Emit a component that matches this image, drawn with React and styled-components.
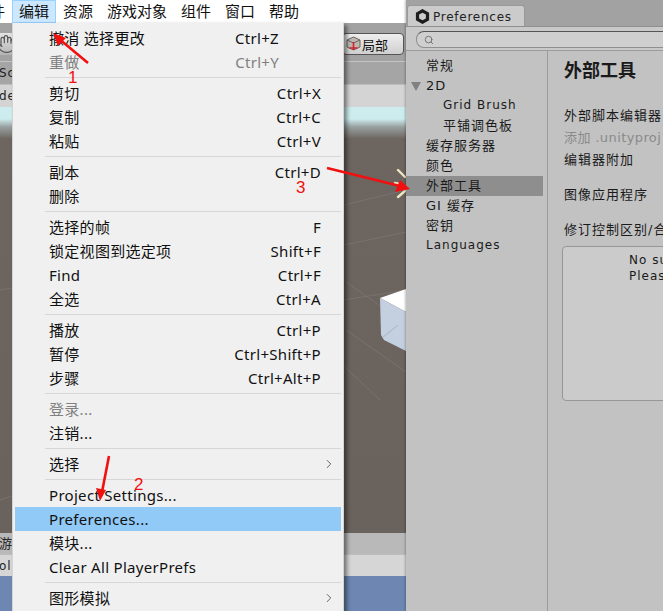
import React from "react";
import styled, { createGlobalStyle } from "styled-components";
import { Hand, Search, ChevronRight } from "lucide-react";

const CJK = `"Noto Sans", "Noto Sans CJK SC", sans-serif`;
const UNITY = `"DejaVu Sans", "Noto Sans CJK SC", sans-serif`;

const topMenus = ["资源", "游戏对象", "组件", "窗口", "帮助"];

const menuGroups = [
  [
    { label: "撤消 选择更改", keys: "Ctrl+Z", inner: true },
    { label: "重做", keys: "Ctrl+Y", inner: true, off: true },
  ],
  [
    { label: "剪切", keys: "Ctrl+X" },
    { label: "复制", keys: "Ctrl+C" },
    { label: "粘贴", keys: "Ctrl+V" },
  ],
  [
    { label: "副本", keys: "Ctrl+D" },
    { label: "删除" },
  ],
  [
    { label: "选择的帧", keys: "F" },
    { label: "锁定视图到选定项", keys: "Shift+F" },
    { label: "Find", keys: "Ctrl+F" },
    { label: "全选", keys: "Ctrl+A" },
  ],
  [
    { label: "播放", keys: "Ctrl+P" },
    { label: "暂停", keys: "Ctrl+Shift+P" },
    { label: "步骤", keys: "Ctrl+Alt+P" },
  ],
  [
    { label: "登录...", off: true },
    { label: "注销..." },
  ],
  [{ label: "选择", sub: true }],
  [
    { label: "Project Settings..." },
    { label: "Preferences...", active: true },
    { label: "模块..." },
    { label: "Clear All PlayerPrefs" },
  ],
  [{ label: "图形模拟", sub: true }],
];

const sideItems = [
  { label: "常规" },
  { label: "2D", open: true },
  { label: "Grid Brush", nested: true, latin: true },
  { label: "平铺调色板", nested: true },
  { label: "缓存服务器" },
  { label: "颜色" },
  { label: "外部工具", selected: true },
  { label: "GI 缓存" },
  { label: "密钥" },
  { label: "Languages", latin: true },
];

const arrows = [
  { from: [88, 63], to: [58, 38], head: [[53, 33], [66, 38], [58, 46]] },
  { from: [109, 456], to: [102, 492], head: [[100, 501], [96, 488], [106, 490]] },
  { from: [327, 168], to: [400, 186], head: [[410, 189], [400, 180], [395, 192]] },
];

const marks = [
  { n: "1", x: 68, y: 68 },
  { n: "2", x: 134, y: 475 },
  { n: "3", x: 296, y: 178 },
];

export default function App() {
  return (
    <Page>
      <GlobalStyle />
      <Editor>
        <MenuBar>
          <CutOff>件</CutOff>
          <TopItem $open>编辑</TopItem>
          {topMenus.map((m) => (
            <TopItem key={m}>{m}</TopItem>
          ))}
        </MenuBar>
        <Toolbar>
          <HandButton>
            <Hand size={20} strokeWidth={1.4} color="#555" />
          </HandButton>
          <PivotButton>
            <svg width="15" height="16" viewBox="0 0 15 16">
              <path d="M7.5 1 L14 4 V11 L7.5 14 L1 11 V4 Z" fill="#bdb7b2" stroke="#6b6461" strokeWidth="1" />
              <path d="M1 4 L7.5 7 L14 4 M7.5 7 V14" fill="none" stroke="#6b6461" strokeWidth="1" />
              <path d="M7.5 6 V14 M3.5 12 H11.5" stroke="#d3222c" strokeWidth="1.6" fill="none" />
            </svg>
            局部
          </PivotButton>
        </Toolbar>
        <TabStrip>
          <StubLabel>Sce</StubLabel>
        </TabStrip>
        <SubBar>
          <StubLabel>de</StubLabel>
        </SubBar>
        <SceneView>
          <svg width="406" height="426" viewBox="0 107 406 426">
            <g stroke="#787270" strokeWidth="1" fill="none">
              <path d="M344 205 L406 190 M344 245 L406 232 M344 300 L406 290" />
              <path d="M346 282 L400 320 M346 330 L406 372 M344 366 L380 400" />
              <path d="M0 290 L12 288 M0 500 L12 496" />
            </g>
            <g stroke="#efe6c6" strokeWidth="2.4" strokeLinecap="round">
              <path d="M398 170 L405 177 M395 183 L403 185 M398 197 L405 191" />
            </g>
            <polygon points="380,298 406,289 406,312" fill="#ffffff" />
            <polygon points="380,298 406,312 406,351 384,340 381,335" fill="#c4cfdf" />
            <path d="M382 338 L398 325" stroke="#a9b3c2" strokeWidth="1" />
          </svg>
        </SceneView>
        <TabStrip $short>
          <StubLabel $cjk>游戏</StubLabel>
        </TabStrip>
        <SubBar $short>
          <StubLabel>ola</StubLabel>
        </SubBar>
        <GameView />
      </Editor>

      <EditMenu>
        {menuGroups.map((group, i) => (
          <MenuGroup key={i}>
            {group.map((item) => (
              <MenuRow key={item.label} $active={item.active} $off={item.off}>
                <span>{item.label}</span>
                {item.keys && <Keys $inner={item.inner}>{item.keys}</Keys>}
                {item.sub && (
                  <SubArrow>
                    <ChevronRight size={14} strokeWidth={1.4} />
                  </SubArrow>
                )}
              </MenuRow>
            ))}
          </MenuGroup>
        ))}
      </EditMenu>

      <Prefs>
        <PrefsTabs>
          <PrefsTab>
            <svg width="15" height="15" viewBox="0 0 15 15">
              <path d="M7.5 1.8 L12.5 4.6 V10.4 L7.5 13.2 L2.5 10.4 V4.6 Z" fill="none" stroke="#1d1d1d" strokeWidth="3.2" />
            </svg>
            Preferences
          </PrefsTab>
        </PrefsTabs>
        <SearchRow>
          <SearchField>
            <Search size={10} strokeWidth={2} color="#666" />
          </SearchField>
        </SearchRow>
        <PrefsBody>
          <Sidebar>
            {sideItems.map((s) => (
              <SideRow key={s.label} $selected={s.selected} $nested={s.nested} $latin={s.latin}>
                {s.open && <Twisty />}
                {s.label}
              </SideRow>
            ))}
          </Sidebar>
          <Content>
            <Heading>外部工具</Heading>
            <Field $top={26}>外部脚本编辑器</Field>
            <Field $top={6} $dim>添加 .unityproj</Field>
            <Field $top={6}>编辑器附加</Field>
            <Field $top={19}>图像应用程序</Field>
            <Field $top={19}>修订控制区别/合并</Field>
            <DiffBox>
              No supported asset merge tools were found.
              <br />
              Please install one of the following tools.
            </DiffBox>
          </Content>
        </PrefsBody>
      </Prefs>

      <Annotations width="663" height="611" viewBox="0 0 663 611">
        {arrows.map((a, i) => (
          <g key={i}>
            <line x1={a.from[0]} y1={a.from[1]} x2={a.to[0]} y2={a.to[1]} stroke="#f01010" strokeWidth="2.6" />
            <polygon points={a.head.map((p) => p.join(",")).join(" ")} fill="#f01010" />
          </g>
        ))}
      </Annotations>
      {marks.map((m) => (
        <Mark key={m.n} $x={m.x} $y={m.y}>
          {m.n}
        </Mark>
      ))}
    </Page>
  );
}

const GlobalStyle = createGlobalStyle`
  html, body {
    margin: 0;
    padding: 0;
    background: #c2c2c2;
  }
`;

const Page = styled.div`
  position: relative;
  display: flex;
  width: 663px;
  height: 611px;
  overflow: hidden;
  font-family: ${CJK};
  color: #111;
`;

const Editor = styled.div`
  display: flex;
  flex-direction: column;
  flex: 0 0 406px;
  height: 100%;
  overflow: hidden;
`;

const MenuBar = styled.div`
  display: flex;
  flex: 0 0 23px;
  align-items: stretch;
  background: #fff;
  font-size: 15px;
`;

const CutOff = styled.div`
  width: 12px;
  line-height: 23px;
  text-indent: -10px;
  overflow: hidden;
`;

const TopItem = styled.div`
  box-sizing: border-box;
  padding: 0 6px;
  line-height: 21px;
  border: 1px solid ${(p) => (p.$open ? "#99d1ff" : "transparent")};
  background: ${(p) => (p.$open ? "#cce8ff" : "transparent")};
  white-space: nowrap;
`;

const Toolbar = styled.div`
  display: flex;
  flex: 0 0 39px;
  box-sizing: border-box;
  align-items: flex-start;
  justify-content: space-between;
  padding: 10px 2px 0 0;
  background: #a2a2a2;
  border-bottom: 1px solid #c4c4c4;
`;

const HandButton = styled.div`
  display: flex;
  align-items: center;
  justify-content: flex-end;
  width: 24px;
  height: 22px;
  margin-left: -8px;
  background: linear-gradient(#e4e4e4, #b4b4b4);
  border-radius: 3px;
`;

const PivotButton = styled.div`
  display: flex;
  align-items: center;
  gap: 1px;
  box-sizing: border-box;
  width: 62px;
  height: 22px;
  padding-left: 3px;
  font-size: 13px;
  background: linear-gradient(#eeeeee, #cfcfcf);
  border: 1px solid #555;
  border-radius: 4px;
`;

const TabStrip = styled.div`
  flex: 0 0 ${(p) => (p.$short ? 22 : 23)}px;
  box-sizing: border-box;
  background: ${(p) => (p.$short ? "#b9b9b9" : "#a5a5a5")};
  border-bottom: 1px solid #bdbdbd;
  overflow: hidden;
`;

const SubBar = styled.div`
  flex: 0 0 ${(p) => (p.$short ? 21 : 22)}px;
  background: ${(p) => (p.$short ? "#d6d6d6" : "#d4d4d4")};
  overflow: hidden;
`;

const StubLabel = styled.div`
  font-family: ${UNITY};
  font-size: ${(p) => (p.$cjk ? 13 : 12)}px;
  line-height: 22px;
  letter-spacing: 1px;
  margin-left: -1px;
  color: #222;
`;

const SceneView = styled.div`
  flex: 0 0 426px;
  height: 426px;
  overflow: hidden;
  background: linear-gradient(#cdeced 0, #cdeced 12px, #98a09f 20px, #6c6560 32px, #6a635d 100%);

  svg {
    display: block;
  }
`;

const GameView = styled.div`
  flex: 1;
  background: #6d87b2;
`;

const EditMenu = styled.div`
  position: absolute;
  left: 12px;
  top: 23px;
  width: 332px;
  height: 600px;
  box-sizing: border-box;
  padding: 3px 2px 0;
  background: #f0f0f0;
  border-left: 1px solid #d4d4d4;
  border-right: 1px solid #d4d4d4;
  box-shadow: 3px 2px 4px rgba(0, 0, 0, 0.45);
  font-size: 15px;
  letter-spacing: 0.3px;
`;

const MenuGroup = styled.div`
  position: relative;
  padding-bottom: 7px;

  &::after {
    content: "";
    position: absolute;
    left: 30px;
    right: 0;
    bottom: 3px;
    height: 1px;
    background: #d7d7d7;
  }

  &:last-child::after {
    display: none;
  }
`;

const MenuRow = styled.div`
  display: flex;
  align-items: center;
  justify-content: space-between;
  box-sizing: border-box;
  height: 24px;
  padding: 0 20px 1px 34px;
  white-space: nowrap;
  color: ${(p) => (p.$off ? "#808080" : "#111")};
  background: ${(p) => (p.$active ? "#91c9f7" : "transparent")};
`;

const Keys = styled.span`
  margin-right: ${(p) => (p.$inner ? 42 : 0)}px;
`;

const SubArrow = styled.span`
  display: flex;
  margin-right: -15px;
  color: #444;
`;

const Prefs = styled.div`
  display: flex;
  flex-direction: column;
  flex: 1;
  min-width: 0;
  background: #c2c2c2;
  box-shadow: -1px 0 2px rgba(0, 0, 0, 0.25);
  z-index: 1;
`;

const PrefsTabs = styled.div`
  flex: 0 0 27px;
  box-sizing: border-box;
  display: flex;
  align-items: flex-end;
  padding-left: 1px;
  background: #a2a2a2;
  border-bottom: 1px solid #8f8f8f;
`;

const PrefsTab = styled.div`
  display: flex;
  align-items: center;
  gap: 3px;
  box-sizing: border-box;
  width: 118px;
  height: 21px;
  padding: 1px 0 0 7px;
  font-family: ${UNITY};
  font-size: 12px;
  letter-spacing: 0.75px;
  color: #222;
  background: #cbcbcb;
  border-radius: 3px 3px 0 0;
  border: 1px solid #999;
  border-bottom: none;
`;

const SearchRow = styled.div`
  flex: 0 0 24px;
  box-sizing: border-box;
  padding: 4px 0 0 10px;
  background: #c9c9c9;
  border-bottom: 1px solid #9c9c9c;
`;

const SearchField = styled.div`
  display: flex;
  align-items: center;
  box-sizing: border-box;
  height: 17px;
  padding-left: 7px;
  background: #cfcfcf;
  border: 1px solid #8f8f8f;
  border-top-color: #555;
  border-right: none;
  border-radius: 8px 0 0 8px;
`;

const PrefsBody = styled.div`
  display: flex;
  flex: 1;
  min-height: 0;
`;

const Sidebar = styled.div`
  flex: 0 0 142px;
  box-sizing: border-box;
  padding-top: 5px;
  border-right: 1px solid #9a9a9a;
  font-family: ${UNITY};
`;

const SideRow = styled.div`
  position: relative;
  width: 137px;
  box-sizing: border-box;
  height: 20px;
  line-height: 19px;
  padding-left: ${(p) => (p.$nested ? 37 : 20)}px;
  font-size: ${(p) => (p.$latin ? 12 : 13)}px;
  letter-spacing: 1px;
  white-space: nowrap;
  color: #1a1a1a;
  background: ${(p) => (p.$selected ? "#8e8e8e" : "transparent")};
`;

const Twisty = styled.span`
  position: absolute;
  left: 5px;
  top: 6px;
  width: 0;
  height: 0;
  border-left: 5px solid transparent;
  border-right: 5px solid transparent;
  border-top: 9px solid #808080;
`;

const Content = styled.div`
  flex: 1;
  min-width: 0;
  padding: 5px 0 0 16px;
  overflow: hidden;
  font-family: ${UNITY};
  white-space: nowrap;
`;

const Heading = styled.div`
  font-family: "Noto Sans CJK SC", sans-serif;
  font-size: 18px;
  line-height: 26px;
  font-weight: 700;
  color: #1a1a1a;
`;

const Field = styled.div`
  margin-top: ${(p) => p.$top}px;
  font-size: 13px;
  line-height: 16px;
  letter-spacing: ${(p) => (p.$dim ? 0.4 : 1)}px;
  color: ${(p) => (p.$dim ? "#8a8a8a" : "#1a1a1a")};
`;

const DiffBox = styled.div`
  box-sizing: border-box;
  width: 400px;
  height: 155px;
  margin: 8px 0 0 -2px;
  padding: 5px 0 0 66px;
  font-size: 12px;
  line-height: 16px;
  letter-spacing: 1px;
  color: #1a1a1a;
  background: #cbcbcb;
  border: 1px solid #979797;
  border-radius: 4px;
`;

const Annotations = styled.svg`
  position: absolute;
  left: 0;
  top: 0;
  z-index: 2;
  pointer-events: none;
`;

const Mark = styled.span`
  position: absolute;
  left: ${(p) => p.$x}px;
  top: ${(p) => p.$y}px;
  z-index: 2;
  font-family: "Liberation Sans", sans-serif;
  font-size: 17px;
  line-height: 20px;
  color: #f01010;
`;
